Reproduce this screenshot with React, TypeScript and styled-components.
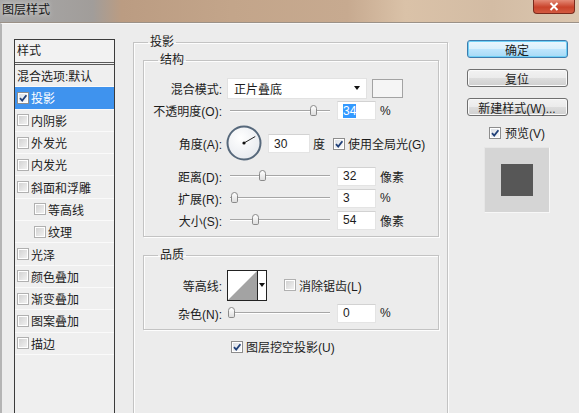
import React from "react";
import styled, { createGlobalStyle } from "styled-components";

const GlobalStyle = createGlobalStyle`
  html, body { margin: 0; padding: 0; background: #ececec; }
  body {
    font-family: "Liberation Sans", "Noto Sans CJK SC", sans-serif;
    font-size: 12px;
    color: #1c1c1c;
  }
`;

const Window = styled.div`
  width: 579px;
  height: 413px;
  overflow: hidden;
  display: flex;
  flex-direction: column;
  background: #ececec;
`;

const TitleBar = styled.div`
  height: 22px;
  flex: none;
  display: flex;
  justify-content: space-between;
  align-items: flex-start;
  background: linear-gradient(
    90deg,
    #a9a9a9 0%,
    #a19d9a 16%,
    #bb9c82 21%,
    #c3a58a 40%,
    #c7aa90 60%,
    #dac2a8 70%,
    #d3bca4 85%,
    #dbc7b0 100%
  );
  border-bottom: 1px solid #9b9187;
`;

const TitleText = styled.div`
  padding: 2px 0 0 2px;
  line-height: 16px;
  color: #151515;
  text-shadow: 0 0 5px rgba(255, 255, 255, 0.8);
`;

const CloseButton = styled.div`
  width: 40px;
  height: 13px;
  margin-right: 4px;
  display: flex;
  align-items: center;
  justify-content: center;
  border: 1px solid #7a2a1c;
  border-top: none;
  border-radius: 0 0 4px 4px;
  background: linear-gradient(#e48a76, #c9432b 55%, #d35a40);
`;

const Body = styled.div`
  flex: 1;
  display: flex;
  min-height: 0;
  overflow: hidden;
  border-top: 1px solid #f7f7f7;
  border-left: 2px solid #b4b4b4;
`;

const Sidebar = styled.div`
  width: 123px;
  flex: none;
  padding: 15px 0 0 12px;
  box-sizing: border-box;
`;

const ListBox = styled.div`
  width: 101px;
  height: 420px;
  box-sizing: border-box;
  border: 1px solid #3b3b3b;
  background: #efefef;
  display: flex;
  flex-direction: column;
`;

const ListHeader = styled.div`
  height: 22px;
  line-height: 22px;
  padding-left: 2px;
  border-bottom: 3px double #5a5a5a;
  background: #f2f2f2;
`;

const ListItem = styled.div<{ $selected?: boolean; $indent?: number }>`
  height: 21.3px;
  flex: none;
  display: flex;
  align-items: center;
  gap: 2px;
  padding-left: ${({ $indent }) => 2 + ($indent ?? 0)}px;
  border-bottom: 1px solid #fafafa;
  background: ${({ $selected }) => ($selected ? "#3f93ee" : "transparent")};
  color: ${({ $selected }) => ($selected ? "#fff" : "#1c1c1c")};
  white-space: nowrap;
`;

const Main = styled.div`
  width: 315px;
  flex: none;
  margin-left: 8px;
  padding-top: 10px;
`;

const Group = styled.fieldset<{ $padTop?: number; $padBottom?: number }>`
  margin: 0;
  min-width: 0;
  padding: ${({ $padTop }) => $padTop ?? 0}px 0 ${({ $padBottom }) => $padBottom ?? 0}px 0;
  border: 1px solid #c3c3c3;
  box-shadow: inset 1px 1px 0 #fdfdfd, 1px 1px 0 #fdfdfd;
`;

const OuterGroup = styled(Group)`
  height: 400px;
  padding-left: 9px;
  padding-right: 8px;
`;

const Legend = styled.legend<{ $offset: number }>`
  margin-left: ${({ $offset }) => $offset}px;
  padding: 0 2px;
  line-height: 16px;
`;

const Rows = styled.div<{ $top: number; $bottom: number }>`
  display: flex;
  flex-direction: column;
  padding: ${({ $top }) => $top}px 0 ${({ $bottom }) => $bottom}px;
`;

const Row = styled.div<{ $h: number }>`
  height: ${({ $h }) => $h}px;
  display: flex;
  align-items: center;
`;

const Label = styled.span`
  width: 78px;
  flex: none;
  margin-right: 5px;
  text-align: right;
  white-space: nowrap;
`;

const Select = styled.div`
  width: 140px;
  height: 21px;
  box-sizing: border-box;
  display: flex;
  align-items: center;
  justify-content: space-between;
  padding: 0 6px 0 6px;
  background: #fff;
  border: 1px solid #e2e2e2;
`;

const Caret = styled.span`
  width: 0;
  height: 0;
  border-left: 3px solid transparent;
  border-right: 3px solid transparent;
  border-top: 4px solid #111;
`;

const Swatch = styled.div`
  width: 31px;
  height: 19px;
  margin-left: 5px;
  box-sizing: border-box;
  border: 1px solid #a3a3a3;
  background: #f5f5f5;
`;

const Track = styled.div`
  position: relative;
  width: 104px;
  height: 12px;
  margin-left: 1px;
  flex: none;
  &::before {
    content: "";
    position: absolute;
    left: 2px;
    right: 2px;
    top: 5px;
    height: 1px;
    background: #a6a6a6;
    box-shadow: 0 1px 0 #fff;
  }
`;

const Thumb = styled.div`
  position: absolute;
  top: 0;
  width: 7px;
  height: 11px;
  box-sizing: border-box;
  border: 1px solid #8a8a8a;
  border-radius: 4px 4px 2px 2px;
  background: linear-gradient(#ffffff, #dedede);
`;

const NumberBox = styled.div<{ $w: number; $ml: number }>`
  width: ${({ $w }) => $w}px;
  height: 19px;
  margin-left: ${({ $ml }) => $ml}px;
  box-sizing: border-box;
  flex: none;
  display: flex;
  align-items: center;
  padding-left: 5px;
  background: #fff;
  border: 1px solid #e4e4e4;
  border-top-color: #d2d2d2;
`;

const Highlight = styled.span`
  background: #3399ff;
  color: #fff;
  line-height: 14px;
`;

const Unit = styled.span<{ $ml?: number }>`
  margin-left: ${({ $ml }) => $ml ?? 4}px;
  white-space: nowrap;
`;

const Box = styled.span<{ $checked?: boolean }>`
  width: 12px;
  height: 12px;
  flex: none;
  box-sizing: border-box;
  border: 1px solid ${({ $checked }) => ($checked ? "#8d8d8d" : "#b0b0b0")};
  box-shadow: inset 0 0 0 1px #fff;
  background: ${({ $checked }) =>
    $checked
      ? "linear-gradient(135deg, #d8dde4, #fbfbfb)"
      : "linear-gradient(135deg, #cfcfcf, #f4f4f4)"};
  display: flex;
  align-items: center;
  justify-content: center;
`;

const CheckLabel = styled.label<{ $ml?: number; $gap?: number }>`
  display: flex;
  align-items: center;
  gap: ${({ $gap }) => $gap ?? 3}px;
  margin-left: ${({ $ml }) => $ml ?? 0}px;
  white-space: nowrap;
`;

const Contour = styled.div`
  display: flex;
  height: 31px;
  box-sizing: border-box;
  border: 1px solid #222;
  background: #fff;
`;

const ContourArrow = styled.div`
  width: 8px;
  border-left: 1px solid #222;
  display: flex;
  align-items: center;
  justify-content: center;
`;

const KnockoutRow = styled.div`
  display: flex;
  padding: 8px 0 0 88px;
`;

const Actions = styled.div`
  width: 132px;
  flex: none;
  display: flex;
  flex-direction: column;
  align-items: center;
  padding: 16px 0 0 6px;
  box-sizing: border-box;
`;

const Button = styled.div<{ $default?: boolean }>`
  width: 101px;
  height: 18px;
  box-sizing: border-box;
  margin-bottom: 11px;
  display: flex;
  align-items: center;
  justify-content: center;
  border: 1px solid ${({ $default }) => ($default ? "#3d7bad" : "#707070")};
  border-radius: 3px;
  background: ${({ $default }) =>
    $default
      ? "linear-gradient(#eaf6fd, #d9f0fc 50%, #bee6fd 51%, #a7d9f5)"
      : "linear-gradient(#f2f2f2, #ebebeb 50%, #dddddd 51%, #cfcfcf)"};
  box-shadow: inset 0 0 0 1px ${({ $default }) => ($default ? "#6fd0f6" : "#fafafa")};
  white-space: nowrap;
`;

const Preview = styled.div`
  width: 66px;
  height: 66px;
  margin-top: 6px;
  box-sizing: border-box;
  display: flex;
  align-items: center;
  justify-content: center;
  background: #d5d5d5;
  border: 1px solid #e6e6e6;
  border-right-color: #f7f7f7;
  border-bottom-color: #f7f7f7;
`;

const PreviewShape = styled.div`
  width: 32px;
  height: 32px;
  background: #575757;
`;

const Check = ({ checked }: { checked?: boolean }) => (
  <Box $checked={checked}>
    {checked && (
      <svg width="10" height="10" viewBox="0 0 10 10">
        <path d="M2 5.2 L4.2 7.6 L8.4 2.2" fill="none" stroke="#1f3f78" strokeWidth="1.8" />
      </svg>
    )}
  </Box>
);

const Slider = ({ value }: { value: number }) => (
  <Track>
    <Thumb style={{ left: value }} />
  </Track>
);

const Dial = ({ angle }: { angle: number }) => {
  const rad = (angle * Math.PI) / 180;
  const x = 18 + 13 * Math.cos(rad);
  const y = 18 - 13 * Math.sin(rad);
  return (
    <svg width="37" height="37" viewBox="0 0 37 37" style={{ marginLeft: -1, flex: "none" }}>
      <defs>
        <radialGradient id="dialFill" cx="0.4" cy="0.35" r="0.7">
          <stop offset="0" stopColor="#ffffff" />
          <stop offset="1" stopColor="#e6e9ee" />
        </radialGradient>
      </defs>
      <circle cx="18" cy="18" r="16.5" fill="url(#dialFill)" stroke="#56687b" strokeWidth="2" />
      <line x1="18" y1="18" x2={x} y2={y} stroke="#222" strokeWidth="1" />
      <circle cx="18" cy="18" r="1.6" fill="#111" />
    </svg>
  );
};

const styles: { name: string; checked?: boolean; indent?: number; selected?: boolean }[] = [
  { name: "投影", checked: true, selected: true },
  { name: "内阴影" },
  { name: "外发光" },
  { name: "内发光" },
  { name: "斜面和浮雕" },
  { name: "等高线", indent: 17 },
  { name: "纹理", indent: 17 },
  { name: "光泽" },
  { name: "颜色叠加" },
  { name: "渐变叠加" },
  { name: "图案叠加" },
  { name: "描边" },
];

export default function App() {
  return (
    <Window>
      <GlobalStyle />
      <TitleBar>
        <TitleText>图层样式</TitleText>
        <CloseButton>
          <svg width="10" height="9" viewBox="0 0 10 9">
            <path d="M1.5 1 L8.5 8 M8.5 1 L1.5 8" stroke="#fff" strokeWidth="2" />
          </svg>
        </CloseButton>
      </TitleBar>
      <Body>
        <Sidebar>
          <ListBox>
            <ListHeader>样式</ListHeader>
            <ListItem>混合选项:默认</ListItem>
            {styles.map((s) => (
              <ListItem key={s.name} $selected={s.selected} $indent={s.indent}>
                <Check checked={s.checked} />
                {s.name}
              </ListItem>
            ))}
          </ListBox>
        </Sidebar>

        <Main>
          <OuterGroup $padTop={2}>
            <Legend $offset={5}>投影</Legend>
            <Group $padBottom={0}>
              <Legend $offset={14}>结构</Legend>
              <Rows $top={9} $bottom={5}>
                <Row $h={22}>
                  <Label>混合模式:</Label>
                  <Select>
                    正片叠底
                    <Caret />
                  </Select>
                  <Swatch />
                </Row>
                <Row $h={23}>
                  <Label>不透明度(O):</Label>
                  <Slider value={82} />
                  <NumberBox $w={39} $ml={5}>
                    <Highlight>34</Highlight>
                  </NumberBox>
                  <Unit>%</Unit>
                </Row>
                <Row $h={43}>
                  <Label>角度(A):</Label>
                  <Dial angle={30} />
                  <NumberBox $w={42} $ml={5}>30</NumberBox>
                  <Unit $ml={3}>度</Unit>
                  <CheckLabel $ml={8}>
                    <Check checked />
                    使用全局光(G)
                  </CheckLabel>
                </Row>
                <Row $h={22}>
                  <Label>距离(D):</Label>
                  <Slider value={31} />
                  <NumberBox $w={39} $ml={5}>32</NumberBox>
                  <Unit>像素</Unit>
                </Row>
                <Row $h={22}>
                  <Label>扩展(R):</Label>
                  <Slider value={3} />
                  <NumberBox $w={39} $ml={5}>3</NumberBox>
                  <Unit>%</Unit>
                </Row>
                <Row $h={22}>
                  <Label>大小(S):</Label>
                  <Slider value={24} />
                  <NumberBox $w={39} $ml={5}>54</NumberBox>
                  <Unit>像素</Unit>
                </Row>
              </Rows>
            </Group>

            <Group style={{ marginTop: 10 }}>
              <Legend $offset={14}>品质</Legend>
              <Rows $top={6} $bottom={4}>
                <Row $h={32}>
                  <Label>等高线:</Label>
                  <Contour>
                    <svg width="29" height="29" viewBox="0 0 29 29">
                      <polygon points="0,29 29,0 29,29" fill="#a3a3a3" />
                    </svg>
                    <ContourArrow>
                      <Caret />
                    </ContourArrow>
                  </Contour>
                  <CheckLabel $ml={17}>
                    <Check />
                    消除锯齿(L)
                  </CheckLabel>
                </Row>
                <Row $h={24}>
                  <Label>杂色(N):</Label>
                  <Slider value={0} />
                  <NumberBox $w={39} $ml={5}>0</NumberBox>
                  <Unit>%</Unit>
                </Row>
              </Rows>
            </Group>

            <KnockoutRow>
              <CheckLabel>
                <Check checked />
                图层挖空投影(U)
              </CheckLabel>
            </KnockoutRow>
          </OuterGroup>
        </Main>

        <Actions>
          <Button $default>确定</Button>
          <Button>复位</Button>
          <Button>新建样式(W)...</Button>
          <CheckLabel $gap={4} style={{ marginTop: -3 }}>
            <Check checked />
            预览(V)
          </CheckLabel>
          <Preview>
            <PreviewShape />
          </Preview>
        </Actions>
      </Body>
    </Window>
  );
}
